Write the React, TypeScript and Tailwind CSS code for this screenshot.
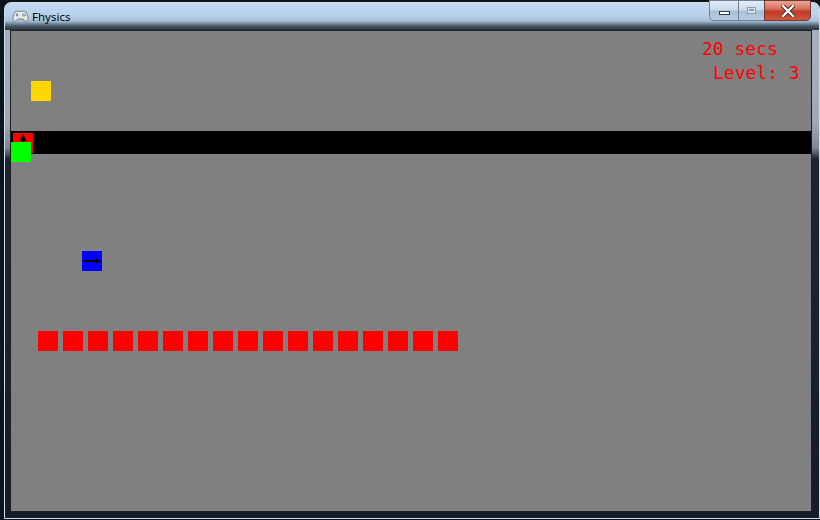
import React from 'react';

const BLOCKS = Array.from({ length: 17 }, (_, i) => i);

const PadIcon = () => (
  <svg width="17" height="14" viewBox="0 0 17 14">
    <path
      d="M3 3 C5 1.5 7 2.5 8.5 2.5 C10 2.5 12 1.5 14 3 C16 5 16.8 10 15.5 12 C14.3 13.3 12.5 11.5 11 10 L6 10 C4.5 11.5 2.7 13.3 1.5 12 C0.2 10 1 5 3 3 Z"
      fill="#e6e9ec"
      stroke="#6d757d"
      strokeWidth="0.9"
    />
    <circle cx="5" cy="6" r="1.4" fill="#8a929a" />
    <circle cx="12" cy="5" r="0.8" fill="#3aa34a" />
    <circle cx="13.3" cy="6.3" r="0.8" fill="#d33c2e" />
    <circle cx="10.7" cy="6.3" r="0.8" fill="#3c6fd1" />
    <circle cx="12" cy="7.6" r="0.8" fill="#e2b72c" />
  </svg>
);

export default function App() {
  return (
    <div className="w-[820px] h-[520px] bg-[#0c141c] pt-[2px] pl-[4px] overflow-hidden">
      {/* window */}
      <div className="w-[816px] h-[517px] flex flex-col rounded-t-[7px] border border-[#d3dde8] bg-[linear-gradient(to_bottom,#a7b3bf_0px,#9ea9b4_120px,#7d8893_145px,#1c2631_156px,#141d27_100%)]">
        {/* title bar */}
        <div className="h-[27px] flex items-start rounded-t-[6px] bg-[linear-gradient(to_bottom,#c3d9f0_0px,#b6d0ec_13px,#a9bfd6_18px,#4b5a6a_23px,#27323e_27px)]">
          <div className="ml-[7px] mt-[6px]">
            <PadIcon />
          </div>
          <span className="ml-[3px] mt-[8px] text-[11.5px] leading-none text-black font-['Noto_Sans',sans-serif]">
            Fhysics
          </span>

          <div className="ml-auto mr-[8px] -mt-[3px] flex h-[21px]">
            <div className="w-[29px] h-full flex items-center justify-center border border-[#6f7f92] border-r-0 rounded-bl-[5px] bg-[linear-gradient(to_bottom,#e3edf8_0%,#cbdbed_45%,#a8bfd8_55%,#b9cfe6_100%)]">
              <div className="mt-[5px] w-[11px] h-[4px] bg-white border border-[#2d3a4a]" />
            </div>
            <div className="w-[26px] h-full flex items-center justify-center border border-[#6f7f92] border-r-0 bg-[linear-gradient(to_bottom,#e3edf8_0%,#cbdbed_45%,#a8bfd8_55%,#b9cfe6_100%)]">
              <div className="w-[9px] h-[7px] border border-[#8e9cac] bg-[#d6e2ee]">
                <div className="h-[2px] mx-[1px] mt-[1px] bg-[#8e9cac]" />
              </div>
            </div>
            <div className="w-[47px] h-full flex items-center justify-center border border-[#6b3a33] rounded-br-[5px] bg-[linear-gradient(to_bottom,#e9a596_0%,#d8735f_40%,#c23c25_55%,#d0553b_100%)]">
              <svg width="14" height="12" viewBox="0 0 14 12">
                <path
                  d="M2 1 L12 11 M12 1 L2 11"
                  stroke="#3a1f1a"
                  strokeWidth="4.2"
                  strokeLinecap="square"
                />
                <path
                  d="M2 1 L12 11 M12 1 L2 11"
                  stroke="#ffffff"
                  strokeWidth="2.4"
                  strokeLinecap="square"
                />
              </svg>
            </div>
          </div>
        </div>

        {/* client area */}
        <div className="pl-[5px] pt-0">
          <div className="relative w-[802px] h-[482px] border border-[#1e1e1e] bg-[#808080] overflow-hidden">
            <div className="absolute left-[691px] top-[9px] text-[18px] leading-none text-[#ff0000] font-['DejaVu_Sans_Mono',monospace] whitespace-pre">
              20 secs
            </div>
            <div className="absolute left-[702px] top-[33px] text-[18px] leading-none text-[#ff0000] font-['DejaVu_Sans_Mono',monospace] whitespace-pre">
              Level: 3
            </div>

            {/* coin */}
            <div className="absolute left-[20px] top-[50px] w-[20px] h-[20px] bg-[#ffd700]" />

            {/* platform */}
            <div className="absolute left-0 top-[100px] w-[800px] h-[23px] bg-black" />

            {/* launcher */}
            <div className="absolute left-[2px] top-[102px] w-[20px] h-[20px] bg-[#ff0000]">
              <svg width="20" height="20" viewBox="0 0 20 20">
                <rect x="9" y="5" width="2" height="13" fill="#000" />
                <polygon points="10,1 6.5,8 13.5,8" fill="#000" />
              </svg>
            </div>

            {/* player */}
            <div className="absolute left-0 top-[111px] w-[20px] h-[20px] bg-[#00ff00]" />

            {/* mover */}
            <div className="absolute left-[71px] top-[220px] w-[20px] h-[20px] bg-[#0000ff]">
              <svg width="20" height="20" viewBox="0 0 20 20">
                <rect x="2" y="9" width="13" height="2" fill="#000" />
                <polygon points="19,10 13,7 13,13" fill="#000" />
              </svg>
            </div>

            {/* hazard row */}
            {BLOCKS.map((i) => (
              <div
                key={i}
                className="absolute top-[300px] w-[20px] h-[20px] bg-[#ff0000]"
                style={{ left: 27 + i * 25 }}
              />
            ))}
          </div>
        </div>
      </div>
    </div>
  );
}
